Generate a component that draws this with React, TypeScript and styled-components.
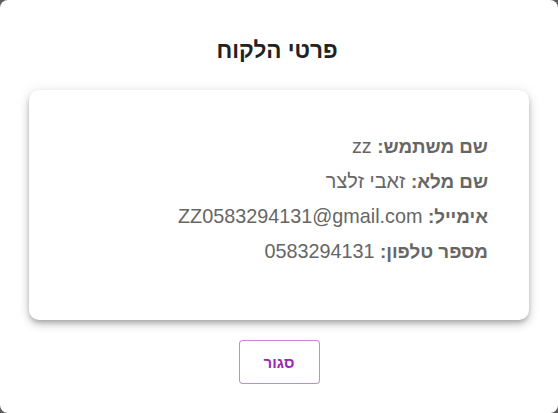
import styled, { createGlobalStyle } from "styled-components";

const GlobalStyle = createGlobalStyle`
  html, body {
    margin: 0;
    padding: 0;
    background: #5c5c5c;
  }
  #root {
    width: 558px;
    height: 413px;
  }
`;

const Dialog = styled.div`
  box-sizing: border-box;
  width: 558px;
  height: 413px;
  background: #ffffff;
  border-radius: 8px;
  direction: rtl;
  display: flex;
  flex-direction: column;
  align-items: center;
  padding: 36px 28px 0;
  font-family: "Liberation Sans", "DejaVu Sans", sans-serif;
`;

const Title = styled.h2`
  margin: 0 4px 0 0;
  font-size: 22.5px;
  font-weight: bold;
  color: #222222;
  line-height: 30px;
`;

const Card = styled.div`
  box-sizing: border-box;
  margin-top: 24px;
  width: 500px;
  height: 230px;
  background: #ffffff;
  border-radius: 10px;
  box-shadow: 0 3px 5px -1px rgba(0, 0, 0, 0.22), 0 5px 8px 0 rgba(0, 0, 0, 0.14),
    0 1px 14px 0 rgba(0, 0, 0, 0.1);
  padding: 39px 41px 0;
  display: flex;
  flex-direction: column;
`;

const Row = styled.p`
  margin: 0;
  font-size: 19.8px;
  line-height: 34px;
  color: #666666;
  text-align: right;
`;

const Label = styled.strong`
  font-weight: bold;
  font-size: 18.8px;
`;

const CloseButton = styled.button`
  margin-top: 20px;
  width: 81px;
  height: 44px;
  background: #ffffff;
  border: 1px solid rgba(156, 39, 176, 0.55);
  border-radius: 4px;
  color: #9c27b0;
  font-family: "Liberation Sans", "DejaVu Sans", sans-serif;
  font-size: 15px;
  font-weight: bold;
  cursor: pointer;
`;

const details = [
  { label: "שם משתמש:", value: "zz" },
  { label: "שם מלא:", value: "זאבי זלצר" },
  { label: "אימייל:", value: "ZZ0583294131@gmail.com" },
  { label: "מספר טלפון:", value: "0583294131" },
];

export default function App() {
  return (
    <>
      <GlobalStyle />
      <Dialog>
        <Title>פרטי הלקוח</Title>
        <Card>
          {details.map((d) => (
            <Row key={d.label}>
              <Label>{d.label}</Label> {d.value}
            </Row>
          ))}
        </Card>
        <CloseButton>סגור</CloseButton>
      </Dialog>
    </>
  );
}
